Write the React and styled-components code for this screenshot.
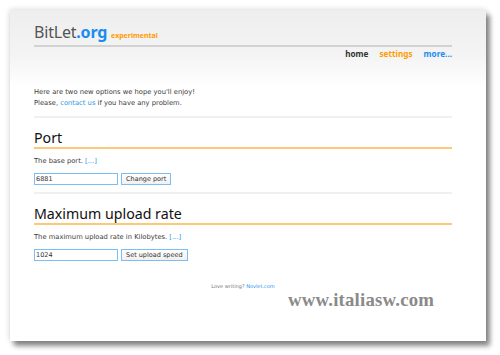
import React from 'react';
import styled, { createGlobalStyle } from 'styled-components';

const GlobalStyle = createGlobalStyle`
  html, body {
    margin: 0;
    padding: 0;
    background: #ffffff;
  }
  body {
    font-family: "DejaVu Sans", Verdana, sans-serif;
  }
`;

const Stage = styled.div`
  width: 500px;
  height: 355px;
  padding: 10px 0 0 10px;
  box-sizing: border-box;
  position: relative;
  overflow: hidden;
`;

const Card = styled.div`
  width: 476px;
  height: 331px;
  background: #ffffff;
  box-shadow: 4px 5px 5px rgba(0, 0, 0, 0.45), 0 0 6px rgba(0, 0, 0, 0.18);
  display: flex;
  flex-direction: column;
`;

const Header = styled.div`
  background: linear-gradient(#eeeeee, #f4f4f4 60%, #ffffff);
  padding: 14px 34px 28px 24px;
`;

const TitleRow = styled.div`
  display: flex;
  align-items: baseline;
  gap: 4px;
  padding-bottom: 5px;
  border-bottom: 2px solid #d2d2d2;
`;

const Logo = styled.div`
  font-family: "Noto Sans", "DejaVu Sans", sans-serif;
  font-size: 16px;
  line-height: 16px;
  color: #555555;
  letter-spacing: -0.2px;
`;

const Org = styled.span`
  color: #1a8cf0;
  font-weight: bold;
`;

const Tag = styled.span`
  font-family: "Noto Sans", sans-serif;
  font-size: 7px;
  font-weight: bold;
  color: #ff9c00;
`;

const Nav = styled.nav`
  display: flex;
  justify-content: flex-end;
  gap: 11px;
  margin-top: 1px;
`;

const NavLink = styled.a`
  font-family: "Noto Sans", sans-serif;
  font-size: 8.2px;
  font-weight: bold;
  color: ${(p) => p.$color};
  text-decoration: none;
`;

const Main = styled.div`
  padding: 0 34px 0 24px;
  display: flex;
  flex-direction: column;
`;

const Text = styled.p`
  margin: 0;
  font-size: 6.75px;
  line-height: 11px;
  color: #3a3a3a;
`;

const Link = styled.a`
  color: #2a96ee;
  text-decoration: none;
`;

const Intro = styled.div`
  padding-bottom: 7px;
  border-bottom: 2px solid #f0f0f0;
`;

const Section = styled.section`
  padding-top: 11px;
  border-bottom: ${(p) => (p.$last ? 'none' : '2px solid #f0f0f0')};
  padding-bottom: 7px;
`;

const Heading = styled.h2`
  margin: 0 0 7px;
  font-family: "Noto Sans", "DejaVu Sans", sans-serif;
  font-weight: normal;
  font-size: 14.2px;
  line-height: 18px;
  color: #111111;
  border-bottom: 2px solid #fdc878;
`;

const Form = styled.form`
  display: flex;
  gap: 3px;
  margin-top: 6px;
`;

const Input = styled.input`
  width: 84px;
  height: 12px;
  box-sizing: border-box;
  border: 1px solid #7cbdf2;
  padding: 0 1px;
  font-family: "DejaVu Sans", sans-serif;
  font-size: 6.5px;
  color: #333333;
  outline: none;
`;

const Button = styled.button`
  height: 12px;
  box-sizing: border-box;
  border: 1px solid #7cbdf2;
  background: linear-gradient(#ffffff, #f0f0f0);
  padding: 0 4px;
  font-family: "DejaVu Sans", sans-serif;
  font-size: 6.5px;
  color: #333333;
  line-height: 10px;
`;

const Footer = styled.div`
  margin-top: 15px;
  text-align: center;
  font-size: 5px;
  color: #777777;
`;

const Watermark = styled.div`
  position: absolute;
  left: 288px;
  top: 289px;
  font-family: "Liberation Serif", serif;
  font-weight: bold;
  font-size: 18.8px;
  color: #8a8a8a;
  letter-spacing: 0.2px;
`;

export default function App() {
  return (
    <Stage>
      <GlobalStyle />
      <Card>
        <Header>
          <TitleRow>
            <Logo>
              BitLet<Org>.org</Org>
            </Logo>
            <Tag>experimental</Tag>
          </TitleRow>
          <Nav>
            <NavLink href="#" $color="#333333">home</NavLink>
            <NavLink href="#" $color="#ff9c00">settings</NavLink>
            <NavLink href="#" $color="#1a8cf0">more...</NavLink>
          </Nav>
        </Header>
        <Main>
          <Intro>
            <Text>Here are two new options we hope you'll enjoy!</Text>
            <Text>
              Please, <Link href="#">contact us</Link> if you have any problem.
            </Text>
          </Intro>
          <Section>
            <Heading>Port</Heading>
            <Text>
              The base port. <Link href="#">[...]</Link>
            </Text>
            <Form onSubmit={(e) => e.preventDefault()}>
              <Input defaultValue="6881" />
              <Button type="submit">Change port</Button>
            </Form>
          </Section>
          <Section $last>
            <Heading>Maximum upload rate</Heading>
            <Text>
              The maximum upload rate in Kilobytes. <Link href="#">[...]</Link>
            </Text>
            <Form onSubmit={(e) => e.preventDefault()}>
              <Input defaultValue="1024" />
              <Button type="submit">Set upload speed</Button>
            </Form>
          </Section>
          <Footer>
            Love writing? <Link href="#">Novlet.com</Link>
          </Footer>
        </Main>
      </Card>
      <Watermark>www.italiasw.com</Watermark>
    </Stage>
  );
}
